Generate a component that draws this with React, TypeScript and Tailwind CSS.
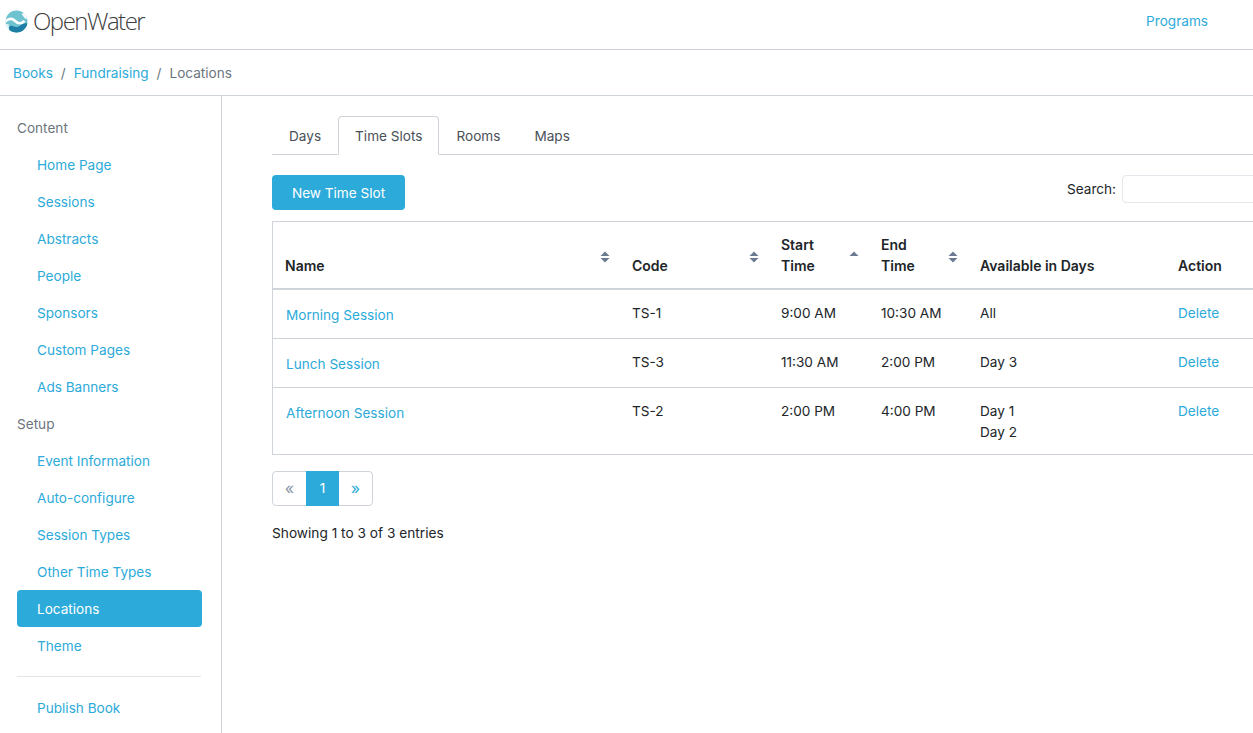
const SETUP = ["Event Information", "Auto-configure", "Session Types", "Other Time Types", "Locations", "Theme"];
const CONTENT = ["Home Page", "Sessions", "Abstracts", "People", "Sponsors", "Custom Pages", "Ads Banners"];
const TABS = ["Days", "Time Slots", "Rooms", "Maps"];

const ROWS = [
  { name: "Morning Session", code: "TS-1", start: "9:00 AM", end: "10:30 AM", days: ["All"] },
  { name: "Lunch Session", code: "TS-3", start: "11:30 AM", end: "2:00 PM", days: ["Day 3"] },
  { name: "Afternoon Session", code: "TS-2", start: "2:00 PM", end: "4:00 PM", days: ["Day 1", "Day 2"] },
];

function Logo() {
  return (
    <svg width="23" height="23" viewBox="0 0 23 23" className="shrink-0">
      <clipPath id="logo-disc">
        <circle cx="11.5" cy="11.5" r="11" />
      </clipPath>
      <g clipPath="url(#logo-disc)">
        <rect width="23" height="23" fill="#6fc2d0" />
        <path d="M4 17C7 14 9 17.500 12 17 15.500 16.500 17 12 23 13.500V23H4Z" fill="#1d7fa6" />
        <path d="M-1 13C3 8 7 8 9.500 10.500 12 13 15 15 19.500 11" fill="none" stroke="#fff" strokeWidth="2.600" />
        <path d="M16.500 4 19.500 2.500 24 7.500 20.500 9Z" fill="#fff" />
        <path d="M0 14.500 3.500 14 4.500 23H0Z" fill="#fff" opacity="0.85" />
      </g>
    </svg>
  );
}

function SortIcon({ up = true, down = true, left }: { up?: boolean; down?: boolean; left: string }) {
  return (
    <svg width="10" height="12" viewBox="0 0 10 12" className={`absolute top-[29px] ${left}`}>
      {up && <path d="M5 0.500 9.500 5H.5Z" fill="#6b7a90" />}
      {down && <path d="M5 11.500 .5 7h9Z" fill="#6b7a90" />}
    </svg>
  );
}

function SideLink({ label, active }: { label: string; active?: boolean }) {
  return (
    <a
      className={`block h-[37px] rounded pl-5 leading-[38px] ${
        active ? "bg-[#2caad9] text-white" : "text-[#2caad9]"
      }`}
    >
      {label}
    </a>
  );
}

export default function App() {
  return (
    <div className="h-[733px] w-[1253px] overflow-hidden bg-white font-['Inter',sans-serif] text-[13.6px] leading-[21px] text-[#212529]">
      <header className="flex h-[50px] items-center justify-between border-b border-[#ced4da] pb-[7px] pl-[5px] pr-[45px]">
        <div className="flex items-center gap-[5px]">
          <Logo />
          <span className="font-['Open_Sans',sans-serif] text-[24px] font-light leading-[36px] tracking-[-1.5px] text-[#404040]">
            OpenWater
          </span>
        </div>
        <a className="text-[#2caad9]">Programs</a>
      </header>

      <nav className="flex h-[46px] items-center gap-2 border-b border-[#ced4da] pl-[13px] pt-[2px]">
        <a className="text-[#2caad9]">Books</a>
        <span className="text-[#6c757d]">/</span>
        <a className="text-[#2caad9]">Fundraising</a>
        <span className="text-[#6c757d]">/</span>
        <span className="text-[#6c757d]">Locations</span>
      </nav>

      <div className="flex h-[637px]">
        <aside className="w-[222px] shrink-0 border-r border-[#ced4da] pl-[17px] pr-[19px] pt-[13px]">
          <div className="h-[37px] leading-[38px] text-[#6c757d]">Content</div>
          {CONTENT.map((c) => (
            <SideLink key={c} label={c} />
          ))}
          <div className="h-[37px] leading-[38px] text-[#6c757d]">Setup</div>
          {SETUP.map((c) => (
            <SideLink key={c} label={c} active={c === "Locations"} />
          ))}
          <hr className="mb-[12px] mt-[12px] mr-[1px] border-[#e3e5e8]" />
          <SideLink label="Publish Book" />
        </aside>

        <main className="w-[1100px] shrink-0 pl-[50px] pt-[20px]">
          <div className="flex h-[39px] border-b border-[#ced4da]">
            {TABS.map((t) => (
              <a
                key={t}
                className={`h-[39px] rounded-t border px-4 py-[9px] text-[#495057] ${
                  t === "Time Slots" ? "border-[#ced4da] border-b-white bg-white" : "border-transparent"
                }`}
              >
                {t}
              </a>
            ))}
          </div>

          <div className="mt-5 flex items-start justify-between">
            <button className="h-[35px] w-[133px] rounded bg-[#2caad9] pt-[2px] text-white">New Time Slot</button>
            <label className="flex items-center gap-[6px] pr-[30px]">
              Search:
              <input className="h-[28px] w-[170px] rounded border border-[#e3e6ea] bg-white" />
            </label>
          </div>

          <table className="mt-[11px] w-[1050px] table-fixed border-collapse border border-[#ced4da]">
            <colgroup>
              <col className="w-[347.5px]" />
              <col className="w-[149px]" />
              <col className="w-[100px]" />
              <col className="w-[99px]" />
              <col className="w-[198px]" />
              <col />
            </colgroup>
            <thead>
              <tr className="border-b-2 border-[#ced4da] text-sm leading-[21px]">
                <th className="relative p-3 text-left align-bottom font-semibold">
                  Name
                  <SortIcon left="left-[327px]" />
                </th>
                <th className="relative p-3 text-left align-bottom font-semibold">
                  Code
                  <SortIcon left="left-[129px]" />
                </th>
                <th className="relative p-3 text-left align-bottom font-semibold">
                  Start
                  <br />
                  Time
                  <SortIcon down={false} left="left-[80px]" />
                </th>
                <th className="relative p-3 text-left align-bottom font-semibold">
                  End
                  <br />
                  Time
                  <SortIcon left="left-[79px]" />
                </th>
                <th className="p-3 text-left align-bottom font-semibold">Available in Days</th>
                <th className="p-3 text-left align-bottom font-semibold">Action</th>
              </tr>
            </thead>
            <tbody>
              {ROWS.map((r) => (
                <tr key={r.code} className="border-b border-[#ced4da]">
                  <td className="px-3 pb-[11px] pt-[13px] align-top">
                    <a className="block h-6 pl-px pt-[2px] text-[#2caad9]">{r.name}</a>
                  </td>
                  <td className="px-3 pb-[11px] pt-[13px] align-top">{r.code}</td>
                  <td className="px-3 pb-[11px] pt-[13px] align-top">{r.start}</td>
                  <td className="px-3 pb-[11px] pt-[13px] align-top">{r.end}</td>
                  <td className="px-3 pb-[11px] pt-[13px] align-top">
                    {r.days.map((d) => (
                      <div key={d}>{d}</div>
                    ))}
                  </td>
                  <td className="px-3 pb-[11px] pt-[13px] align-top">
                    <a className="text-[#2caad9]">Delete</a>
                  </td>
                </tr>
              ))}
            </tbody>
          </table>

          <div className="mt-4 flex h-[35px] w-[101px] rounded border border-[#ced4da] text-center">
            <span className="w-[33px] text-base leading-[33px] text-[#8796a5]">«</span>
            <span className="-mt-px h-[35px] w-[33px] bg-[#2caad9] leading-[35px] text-white">1</span>
            <a className="flex-1 text-base leading-[33px] text-[#2caad9]">»</a>
          </div>
          <div className="mt-[17px] text-[13.7px]">Showing 1 to 3 of 3 entries</div>
        </main>
      </div>
    </div>
  );
}
